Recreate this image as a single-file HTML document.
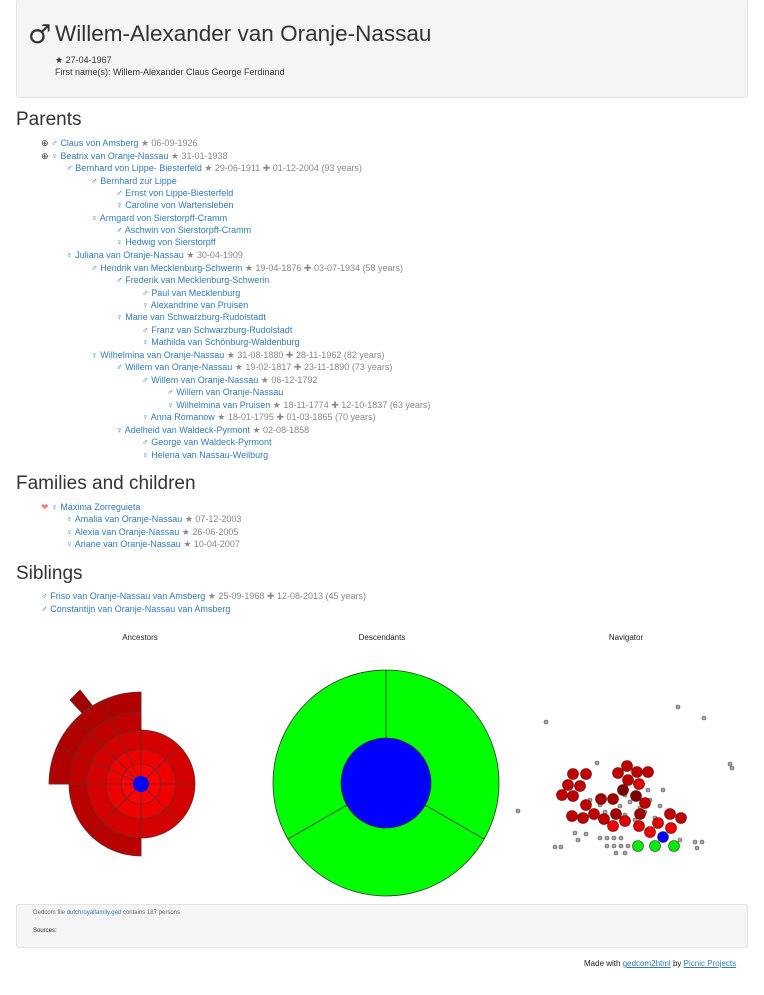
<!DOCTYPE html>
<html><head><meta charset="utf-8"><style>
body{margin:0;width:764px;height:995px;position:relative;font-family:"Liberation Sans",Arial,sans-serif;color:#333;background:#fff;overflow:hidden}
.jb{position:absolute;left:16px;top:-1px;width:730px;height:97px;background:#f5f5f5;border:1px solid #e3e3e3;border-radius:3px}
h1{position:absolute;left:28px;top:20px;margin:0;font-weight:normal;font-size:22.5px;color:#333;white-space:nowrap}
h1 .s{font-size:26px;font-family:"DejaVu Sans",sans-serif;display:inline-block;width:27px;vertical-align:-2px}
.sm{position:absolute;font-size:9px;color:#333}
h2{position:absolute;left:16px;margin:0;font-weight:normal;font-size:19px;color:#333}
.r{position:absolute;font-size:9px;white-space:nowrap;color:#888;line-height:12px}
.r a{color:#337ab7;text-decoration:none}
.ct{position:absolute;font-size:8px;color:#222;top:633px;transform:translateX(-50%)}
.ft{position:absolute;left:16px;top:904px;width:730px;height:42px;background:#f5f5f5;border:1px solid #e3e3e3;border-radius:3px}
</style></head><body>
<div class="jb"></div>
<h1><span class="s">♂</span>Willem-Alexander van Oranje-Nassau</h1>
<div class="sm" style="left:55px;top:55px">★ 27-04-1967</div>
<div class="sm" style="left:55px;top:67px">First name(s): Willem-Alexander Claus George Ferdinand</div>

<h2 style="top:109px">Parents</h2>
<div class="r" style="left:41px;top:137px"><span style="color:#333">⊕</span> <a>♂ Claus von Amsberg</a> ★ 06-09-1926</div>
<div class="r" style="left:41px;top:150px"><span style="color:#333">⊕</span> <a>♀ Beatrix van Oranje-Nassau</a> ★ 31-01-1938</div>
<div class="r" style="left:66px;top:162px"><a>♂ Bernhard von Lippe- Biesterfeld</a> ★ 29-06-1911 ✚ 01-12-2004 (93 years)</div>
<div class="r" style="left:91px;top:175px"><a>♂ Bernhard zur Lippe</a></div>
<div class="r" style="left:116px;top:187px"><a>♂ Ernst von Lippe-Biesterfeld</a></div>
<div class="r" style="left:116px;top:199px"><a>♀ Caroline von Wartensleben</a></div>
<div class="r" style="left:91px;top:212px"><a>♀ Armgard von Sierstorpff-Cramm</a></div>
<div class="r" style="left:116px;top:224px"><a>♂ Aschwin von Sierstorpff-Cramm</a></div>
<div class="r" style="left:116px;top:236px"><a>♀ Hedwig von Sierstorpff</a></div>
<div class="r" style="left:66px;top:249px"><a>♀ Juliana van Oranje-Nassau</a> ★ 30-04-1909</div>
<div class="r" style="left:91px;top:262px"><a>♂ Hendrik van Mecklenburg-Schwerin</a> ★ 19-04-1876 ✚ 03-07-1934 (58 years)</div>
<div class="r" style="left:116px;top:274px"><a>♂ Frederik van Mecklenburg-Schwerin</a></div>
<div class="r" style="left:142px;top:287px"><a>♂ Paul van Mecklenburg</a></div>
<div class="r" style="left:142px;top:299px"><a>♀ Alexandrine van Pruisen</a></div>
<div class="r" style="left:116px;top:311px"><a>♀ Marie van Schwarzburg-Rudolstadt</a></div>
<div class="r" style="left:142px;top:324px"><a>♂ Franz van Schwarzburg-Rudolstadt</a></div>
<div class="r" style="left:142px;top:336px"><a>♀ Mathilda van Schönburg-Waldenburg</a></div>
<div class="r" style="left:91px;top:349px"><a>♀ Wilhelmina van Oranje-Nassau</a> ★ 31-08-1880 ✚ 28-11-1962 (82 years)</div>
<div class="r" style="left:116px;top:361px"><a>♂ Willem van Oranje-Nassau</a> ★ 19-02-1817 ✚ 23-11-1890 (73 years)</div>
<div class="r" style="left:142px;top:374px"><a>♂ Willem van Oranje-Nassau</a> ★ 06-12-1792</div>
<div class="r" style="left:167px;top:386px"><a>♂ Willem van Oranje-Nassau</a></div>
<div class="r" style="left:167px;top:399px"><a>♀ Wilhelmina van Pruisen</a> ★ 18-11-1774 ✚ 12-10-1837 (63 years)</div>
<div class="r" style="left:142px;top:411px"><a>♀ Anna Romanow</a> ★ 18-01-1795 ✚ 01-03-1865 (70 years)</div>
<div class="r" style="left:116px;top:424px"><a>♀ Adelheid van Waldeck-Pyrmont</a> ★ 02-08-1858</div>
<div class="r" style="left:142px;top:436px"><a>♂ George van Waldeck-Pyrmont</a></div>
<div class="r" style="left:142px;top:449px"><a>♀ Helena van Nassau-Weilburg</a></div>

<h2 style="top:473px">Families and children</h2>
<div class="r" style="left:41px;top:501px"><span style="color:#f08080">❤</span> <a>♀ Máxima Zorreguieta</a></div>
<div class="r" style="left:66px;top:513px"><a>♀ Amalia van Oranje-Nassau</a> ★ 07-12-2003</div>
<div class="r" style="left:66px;top:526px"><a>♀ Alexia van Oranje-Nassau</a> ★ 26-06-2005</div>
<div class="r" style="left:66px;top:538px"><a>♀ Ariane van Oranje-Nassau</a> ★ 10-04-2007</div>

<h2 style="top:563px">Siblings</h2>
<div class="r" style="left:41px;top:590px"><a>♂ Friso van Oranje-Nassau van Amsberg</a> ★ 25-09-1968 ✚ 12-08-2013 (45 years)</div>
<div class="r" style="left:41px;top:603px"><a>♂ Constantijn van Oranje-Nassau van Amsberg</a></div>

<div class="ct" style="left:140px">Ancestors</div>
<div class="ct" style="left:382px">Descendants</div>
<div class="ct" style="left:626px">Navigator</div>

<svg width="764" height="995" style="position:absolute;left:0;top:0">
<g stroke="#6b2a2a" stroke-width="0.8">
<path d="M70 700 L80 690 L92 705 L82 713 Z" fill="#a00000"/>
<path d="M141 784 L49 784 A92 92 0 0 1 141 692 Z" fill="#b00000"/>
<path d="M141 784 L141 856 A72 72 0 0 1 69 784 Z" fill="#b80000"/>
<path d="M141 784 L69 784 A72 72 0 0 1 141 712 Z" fill="#c00000"/>
<circle cx="141" cy="784" r="54" fill="#d40000"/>
<circle cx="141" cy="784" r="35" fill="#ec0000"/>
<circle cx="141" cy="784" r="20" fill="#ff0000"/>
<line x1="141" y1="692" x2="141" y2="856"/><line x1="49" y1="784" x2="195" y2="784"/>
<line x1="141" y1="784" x2="76" y2="719"/><line x1="141" y1="784" x2="90" y2="835"/>
<line x1="141" y1="784" x2="179" y2="746"/><line x1="141" y1="784" x2="179" y2="822"/>
<line x1="141" y1="784" x2="57" y2="746"/><line x1="141" y1="784" x2="103" y2="700"/>
</g>
<circle cx="141" cy="784" r="8" fill="#0000ff"/>
<g stroke="#333" stroke-width="0.8">
<circle cx="386" cy="783" r="113" fill="#00ff00"/>
<line x1="386" y1="670" x2="386" y2="738"/>
<line x1="288" y1="839" x2="347" y2="805"/>
<line x1="484" y1="839" x2="425" y2="805"/>
<circle cx="386" cy="783" r="45" fill="#0000ff"/>
</g>
<g fill="#aaa" stroke="#444" stroke-width="0.6">
<circle cx="546" cy="722" r="2"/><circle cx="678" cy="707" r="2"/><circle cx="704" cy="718" r="2"/><circle cx="597" cy="763" r="2"/><circle cx="730" cy="764" r="2"/><circle cx="732" cy="768" r="2"/><circle cx="518" cy="811" r="2"/>
<circle cx="555" cy="847" r="2"/><circle cx="561" cy="847" r="2"/><circle cx="575" cy="833" r="2"/><circle cx="578" cy="840" r="2"/><circle cx="586" cy="834" r="2"/><circle cx="563" cy="797" r="2"/>
<circle cx="600" cy="838" r="2"/><circle cx="607" cy="838" r="2"/><circle cx="614" cy="838" r="2"/><circle cx="621" cy="838" r="2"/><circle cx="607" cy="846" r="2"/><circle cx="614" cy="846" r="2"/><circle cx="621" cy="846" r="2"/><circle cx="628" cy="846" r="2"/><circle cx="616" cy="853" r="2"/><circle cx="625" cy="853" r="2"/><circle cx="695" cy="842" r="2"/><circle cx="702" cy="842" r="2"/><circle cx="697" cy="848" r="2"/>
<circle cx="590" cy="800" r="2"/><circle cx="600" cy="805" r="2"/><circle cx="610" cy="800" r="2"/><circle cx="620" cy="806" r="2"/><circle cx="630" cy="802" r="2"/><circle cx="640" cy="808" r="2"/><circle cx="650" cy="800" r="2"/><circle cx="625" cy="795" r="2"/><circle cx="636" cy="795" r="2"/><circle cx="645" cy="812" r="2"/><circle cx="655" cy="818" r="2"/><circle cx="660" cy="806" r="2"/><circle cx="625" cy="815" r="2"/><circle cx="635" cy="820" r="2"/><circle cx="605" cy="812" r="2"/><circle cx="663" cy="790" r="2"/><circle cx="648" cy="790" r="2"/><circle cx="668" cy="828" r="2"/><circle cx="680" cy="840" r="2"/><circle cx="640" cy="828" r="2"/>
</g>
<g fill="#c00000" stroke="#600" stroke-width="0.6">
<circle cx="573" cy="774" r="5.5"/><circle cx="586" cy="774" r="5.5"/><circle cx="568" cy="785" r="5.5"/><circle cx="580" cy="786" r="5.5"/><circle cx="562" cy="795" r="5.5"/><circle cx="573" cy="796" r="5.5"/><circle cx="618" cy="773" r="5.5"/><circle cx="627" cy="766" r="5.5"/><circle cx="637" cy="772" r="5.5"/><circle cx="648" cy="772" r="5.5"/><circle cx="628" cy="780" r="5.5"/><circle cx="639" cy="784" r="5.5" fill="#e00000"/><circle cx="623" cy="790" r="5.5" fill="#800000"/><circle cx="636" cy="796" r="5.5" fill="#800000"/><circle cx="586" cy="805" r="5.5"/><circle cx="601" cy="799" r="5.5" fill="#a00000"/><circle cx="613" cy="799" r="5.5" fill="#a00000"/><circle cx="645" cy="803" r="5.5"/><circle cx="572" cy="816" r="5.5"/><circle cx="583" cy="818" r="5.5"/><circle cx="594" cy="814" r="5.5"/><circle cx="604" cy="819" r="5.5"/><circle cx="616" cy="814" r="5.5" fill="#a00000"/><circle cx="613" cy="826" r="5.5" fill="#f00000"/><circle cx="625" cy="821" r="5.5" fill="#e00000"/><circle cx="640" cy="814" r="5.5" fill="#a00000"/><circle cx="639" cy="826" r="5.5" fill="#e00000"/><circle cx="650" cy="832" r="5.5" fill="#f00000"/><circle cx="658" cy="823" r="5.5" fill="#e00000"/><circle cx="670" cy="814" r="5.5"/><circle cx="681" cy="818" r="5.5"/><circle cx="671" cy="828" r="5.5" fill="#f00000"/>
</g>
<circle cx="663" cy="837" r="5.5" fill="#0000ff" stroke="#333" stroke-width="0.6"/>
<g fill="#00ee00" stroke="#333" stroke-width="0.6"><circle cx="638" cy="846" r="5.5"/><circle cx="655" cy="846" r="5.5"/><circle cx="674" cy="846" r="5.5"/></g>
</svg>

<div class="ft"></div>
<div class="sm" style="left:33px;top:910px;font-size:6px;color:#666">Gedcom file <span style="color:#337ab7">dutchroyalfamily.ged</span> contains 187 persons</div>
<div class="sm" style="left:33px;top:928px;font-size:6px;color:#222">Sources:</div>
<div class="sm" style="left:584px;top:959px;font-size:8px;color:#222">Made with <span style="color:#337ab7;text-decoration:underline">gedcom2html</span> by <span style="color:#337ab7;text-decoration:underline">Picnic Projects</span></div>
</body></html>
